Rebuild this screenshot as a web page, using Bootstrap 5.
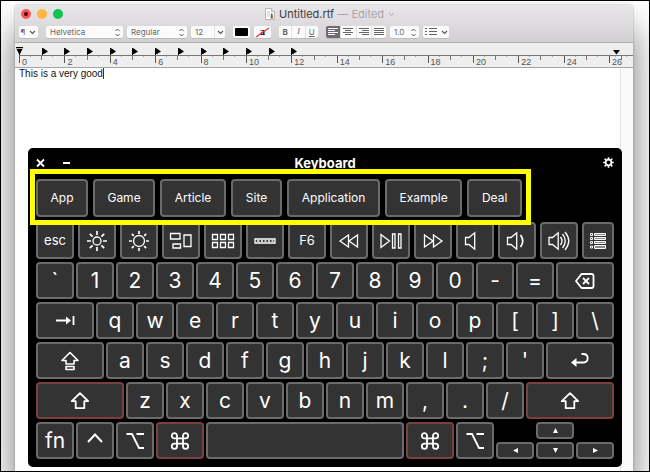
<!DOCTYPE html>
<html lang="en">
<head>
<meta charset="utf-8">
<meta name="viewport" content="width=device-width, initial-scale=1">
<title>Untitled.rtf</title>
<link rel="stylesheet" href="https://cdn.jsdelivr.net/npm/bootstrap@5.3.0/dist/css/bootstrap.min.css">
<style>
body { font-family: Inter, "Liberation Sans", sans-serif; border: 1px solid #000; background: #fff; overflow: hidden; }
.editor { margin: 4px 16px 0 14px; border-radius: 4px 4px 0 0; background: #fff; box-shadow: 0 0 2px rgba(0,0,0,.35), 0 24px 36px rgba(0,0,0,.55); }
.chrome { background: linear-gradient(#e9e6e9, #d2d0d2); border-bottom: 1px solid #b1afb1; border-radius: 4px 4px 0 0; padding: 0 4px; }
.titlebar { display: grid; grid-template-columns: 1fr auto 1fr; height: 18px; align-items: center; }
.lights { gap: 6px; padding-left: 2px; }
.light { width: 10px; height: 10px; border-radius: 50%; border: 0; padding: 0; display: grid; place-items: center; }
.light.red { background: #fc5753; } .light.amber { background: #fdb843; } .light.green { background: #0bc751; }
.light.red::after { content: ""; width: 4px; height: 4px; border-radius: 50%; background: #4d0000; }
.filename { font-size: 11px; line-height: 14px; color: #3c3a3c; padding-left: 12px; }
.state { color: #a9a6a9; }
.tools { padding: 3px 0 4px; height: 19px; }
.tools button, .tools select, .tools input, .tools .pill { height: 12px; border: 0; border-radius: 2px; background-color: #fbfbfb; color: #666; font-size: 8px; line-height: 12px; padding: 0; box-shadow: 0 1px 0 #bdbbbd; }
.tools button { display: flex; align-items: center; justify-content: center; }
.tools select { appearance: none; padding: 0 12px 0 4px; background-repeat: no-repeat; background-position: right 3px center; background-image: url("data:image/svg+xml,%3Csvg xmlns='http://www.w3.org/2000/svg' width='5' height='9' viewBox='0 0 5 9' fill='none' stroke='%23555'%3E%3Cpath d='M.5 3l2-2 2 2M.5 6l2 2 2-2'/%3E%3C/svg%3E"); }
.tools .segments { display: flex; box-shadow: 0 1px 0 #bdbbbd; border-radius: 2px; overflow: hidden; }
.tools .segments > * { flex: 1; border-radius: 0; box-shadow: none; border-left: 1px solid #e2e2e2; }
.tools .segments > :first-child { border-left: 0; }
.tools .segments > .chosen { background: #6d6b6d; color: #fff; }
.tools .segments > input { min-width: 0; flex-grow: 2; }
.w-para { width: 19px; } .w-face { width: 77px; } .w-style { width: 60px; } .w-size { width: 34px; } .w-ink { width: 17px; } .w-biu { width: 39px; } .w-align { width: 60px; } .w-space { width: 29px; } .w-list { width: 26px; }
.serif { font-family: "Liberation Serif", serif; }
.ruler { background: #eee; border-bottom: 1px solid #a5a5a5; padding-left: 4px; height: 25px; }
.unit { flex: 1 1 0; min-width: 0; display: flex; flex-direction: column; }
.unit.tail { flex: 0 0 24px; }
.stops { height: 13px; border-bottom: 1px solid #777; display: flex; align-items: flex-end; }
.stops > * { flex: 1; height: 7px; display: flex; }
.ticks { height: 11px; font: 9px/13px "Liberation Sans", sans-serif; color: #555; padding-left: 3px; background: linear-gradient(#555,#555) 0 0/1px 7px no-repeat, linear-gradient(#777,#777) 50% 0/1px 4px no-repeat, linear-gradient(#aaa,#aaa) 25% 0/1px 1px no-repeat, linear-gradient(#aaa,#aaa) 75% 0/1px 1px no-repeat; }
.paper { background: linear-gradient(90deg, #fff calc(100% - 13px), #e6e6e6 calc(100% - 13px), #e6e6e6 calc(100% - 12px), #fafafa calc(100% - 12px)); }
.prose { height: 80px; padding-left: 4px; }
.prose input { font: 10px/12px "Liberation Sans", sans-serif; color: #111; border: 0; padding: 0; width: 84px; height: 12px; background: none; }
.caret { width: 1px; height: 11px; background: #333; }
.keyboard { background: #000; border-radius: 5px; margin: 0 11px 0 13px; padding: 0 8px 8px; color: #fff; }
.kb-head { display: grid; grid-template-columns: 1fr auto 1fr; height: 31px; align-items: center; padding-bottom: 2px; }
.kb-head h1 { font-size: 13px; line-height: 16px; font-weight: 700; margin: 0; }
.kb-head button { background: none; border: 0; padding: 0; color: #fff; display: flex; }
.guesses { display: flex; gap: 5px; position: relative; width: 84.1%; margin-bottom: 5px; }
.guesses::after { content: ""; position: absolute; inset: -10px -9px -8px -6px; border: 5px solid #ff0; pointer-events: none; z-index: 2; }
.keyrow { display: flex; gap: 2px; margin-bottom: 3px; }
.keyrow:last-child { margin-bottom: 0; }
.keyrow.fkeys { gap: 4px; }
.key { --w: 38; flex: var(--w) var(--w) calc(var(--w) * 1px); min-width: 0; height: 37px; padding: 0; border: 2px solid #6b6b6b; border-radius: 4px; background: #333; color: #fff; font-size: 21px; line-height: 1; display: flex; align-items: center; justify-content: center; }
.guesses .key { height: 38px; font-size: 12px; }
.fkeys .key { font-size: 13px; }
.k32 { --w: 32; } .k48 { --w: 48; } .k51 { --w: 51; } .k52 { --w: 52; } .k55 { --w: 55; } .k58 { --w: 58; } .k62 { --w: 62; } .k66 { --w: 66; } .k68 { --w: 68; } .k77 { --w: 77; } .k88 { --w: 88; } .k93 { --w: 93; } .k198 { --w: 198; }
.key.held { border-color: #7c4040; }
.arrows { flex: 118 118 118px; display: grid; grid-template-columns: repeat(3, 1fr); gap: 3px 2px; }
.arrows .key { height: 17px; }
.arrows .up { grid-column: 2; } .arrows .west { grid-column: 1; }
.ico { width: 24px; height: 24px; flex: none; fill: none; stroke: currentColor; stroke-width: 1.3; }
.bold-ico { stroke-width: 1.8; }
.tiny { width: 7px; height: 7px; fill: currentColor; }
</style>
<script src="https://cdn.jsdelivr.net/npm/bootstrap@5.3.0/dist/js/bootstrap.bundle.min.js"></script>
</head>
<body class="min-vh-100 d-flex flex-column">
<svg class="d-none" aria-hidden="true">
  <symbol id="stop" viewBox="0 0 6 7"><path d="M0 0h1l5 3.500-4 2.500H1v1H0z" fill="#000"/></symbol>
  <symbol id="down" viewBox="0 0 7 5"><path d="M1 1l2.500 2.500L6 1" fill="none" stroke="#555" stroke-width="1.100"/></symbol>
  <symbol id="shift" viewBox="0 0 24 24"><path d="M12 4.200L20.200 12.200H16.300V19.200H7.700V12.200H3.800z" stroke-linejoin="round"/></symbol>
  <symbol id="option" viewBox="0 0 24 24"><path d="M3.500 5H9l7 14h5M13.500 5H21"/></symbol>
  <symbol id="command" viewBox="0 0 24 24"><path d="M9 9V6.800A2.600 2.600 0 1 0 6.400 9.400H17.600A2.600 2.600 0 1 0 15 6.800V17.200A2.600 2.600 0 1 0 17.600 14.600H6.400A2.600 2.600 0 1 0 9 17.200z"/></symbol>
</svg>
<main class="editor flex-fill d-flex flex-column">
  <header class="chrome">
    <div class="titlebar">
      <div class="d-flex lights">
        <button class="light red" aria-label="Close"></button>
        <button class="light amber" aria-label="Minimize"></button>
        <button class="light green" aria-label="Zoom"></button>
      </div>
      <div class="filename d-flex align-items-center gap-1">
        <svg width="10" height="12" viewBox="0 0 10 12"><path d="M.5.5h6l3 3v8h-9z" fill="#fff" stroke="#b5b5b5"/><path d="M6.500.5v3h3" fill="#e5e5e5" stroke="#b5b5b5"/><path d="M2 4h3M2 6h3M2 8h3" stroke="#ccc"/><path d="M6 5.500h1.500l.5 5H5.500z" fill="#8b5a32"/></svg>
        <span>Untitled.rtf <span class="state">— Edited</span></span>
        <svg width="7" height="5"><path d="M1 1l2.500 2.500L6 1" fill="none" stroke="#a9a6a9"/></svg>
      </div>
    </div>
    <div class="tools d-flex">
      <button class="w-para me-2" aria-label="Paragraph styles">¶<svg class="ms-1" width="7" height="5"><use href="#down"/></svg></button>
      <select class="w-face me-1" aria-label="Font"><option>Helvetica</option></select>
      <select class="w-style me-1" aria-label="Typeface"><option>Regular</option></select>
      <div class="segments w-size me-2">
        <input class="ps-1" aria-label="Size" value="12">
        <button aria-label="Sizes"><svg width="7" height="5"><use href="#down"/></svg></button>
      </div>
      <button class="w-ink me-1" aria-label="Text colour"><svg width="13" height="8"><rect width="13" height="8" rx="1" fill="#000"/></svg></button>
      <button class="w-ink me-2" aria-label="Highlight colour"><svg width="15" height="11" viewBox="0 0 15 11"><text x="5" y="8" font-family="Liberation Serif, serif" font-weight="700" font-size="10" fill="#000">a</text><path d="M1 10L14 1" stroke="#e5304a" stroke-width="1.300"/></svg></button>
      <div class="segments w-biu me-2">
        <button class="fw-bold">B</button><button class="serif"><i>I</i></button><button><u>U</u></button>
      </div>
      <div class="segments w-align me-1">
        <button class="chosen" aria-label="Align left"><svg width="10" height="8" stroke="currentColor"><path d="M0 .5h10M0 2.500h7M0 4.500h10M0 6.500h7"/></svg></button>
        <button aria-label="Centre"><svg width="10" height="8" stroke="currentColor"><path d="M0 .5h10M2 2.500h6M0 4.500h10M2 6.500h6"/></svg></button>
        <button aria-label="Align right"><svg width="10" height="8" stroke="currentColor"><path d="M0 .5h10M3 2.500h7M0 4.500h10M3 6.500h7"/></svg></button>
        <button aria-label="Justify"><svg width="10" height="8" stroke="currentColor"><path d="M0 .5h10M0 2.500h10M0 4.500h10M0 6.500h10"/></svg></button>
      </div>
      <select class="w-space me-1" aria-label="Line spacing"><option>1.0</option></select>
      <button class="w-list" aria-label="Lists"><svg width="12" height="8" stroke="currentColor"><path d="M0 .5h2M4 .5h8M0 3.500h2M4 3.500h8M0 6.500h2M4 6.500h8"/></svg><svg class="ms-1" width="7" height="5"><use href="#down"/></svg></button>
    </div>
  </header>
  <div class="ruler d-flex">
    <div class="unit"><div class="stops"><span><svg width="7" height="7" style="margin-left:-3px;overflow:visible"><path d="M0 -1h7v1.200H0zM.5 1h6L4 6v1H3V6z"/></svg></span><span><svg width="6" height="7"><use href="#stop"/></svg></span></div><div class="ticks">0</div></div>
    <div class="unit"><div class="stops"><span><svg width="6" height="7"><use href="#stop"/></svg></span><span><svg width="6" height="7"><use href="#stop"/></svg></span></div><div class="ticks">2</div></div>
    <div class="unit"><div class="stops"><span><svg width="6" height="7"><use href="#stop"/></svg></span><span><svg width="6" height="7"><use href="#stop"/></svg></span></div><div class="ticks">4</div></div>
    <div class="unit"><div class="stops"><span><svg width="6" height="7"><use href="#stop"/></svg></span><span><svg width="6" height="7"><use href="#stop"/></svg></span></div><div class="ticks">6</div></div>
    <div class="unit"><div class="stops"><span><svg width="6" height="7"><use href="#stop"/></svg></span><span><svg width="6" height="7"><use href="#stop"/></svg></span></div><div class="ticks">8</div></div>
    <div class="unit"><div class="stops"><span><svg width="6" height="7"><use href="#stop"/></svg></span><span><svg width="6" height="7"><use href="#stop"/></svg></span></div><div class="ticks">10</div></div>
    <div class="unit"><div class="stops"><span><svg width="6" height="7"><use href="#stop"/></svg></span></div><div class="ticks">12</div></div>
    <div class="unit"><div class="stops"></div><div class="ticks">14</div></div>
    <div class="unit"><div class="stops"></div><div class="ticks">16</div></div>
    <div class="unit"><div class="stops"></div><div class="ticks">18</div></div>
    <div class="unit"><div class="stops"></div><div class="ticks">20</div></div>
    <div class="unit"><div class="stops"></div><div class="ticks">22</div></div>
    <div class="unit"><div class="stops"></div><div class="ticks">24</div></div>
    <div class="unit tail"><div class="stops"><span class="ps-1"><svg width="7" height="7"><path d="M0 2h7L3.500 6.500z"/></svg></span></div><div class="ticks">26</div></div>
  </div>
  <section class="paper flex-fill">
    <div class="prose d-flex"><input aria-label="Document text" value="This is a very good"><span class="caret"></span></div>
    <div class="keyboard">
      <div class="kb-head">
        <div class="d-flex align-items-center">
          <button class="me-3" aria-label="Close keyboard"><svg width="10" height="10" stroke="#fff" stroke-width="1.800"><path d="M1 1.500l7 7M8 1.500l-7 7"/></svg></button>
          <button aria-label="Minimize keyboard"><svg width="9" height="10"><rect x="1" y="4" width="7" height="2" fill="#fff"/></svg></button>
        </div>
        <h1>Keyboard</h1>
        <button class="ms-auto" aria-label="Settings"><svg width="11" height="11" viewBox="-5.500 -5.500 11 11" fill="none" stroke="#fff"><circle r="2.900" stroke-width="1.800"/><path stroke-width="1.700" d="M0-5.300v2M0 5.300v-2M-5.300 0h2M5.300 0h-2M-3.800-3.800l1.400 1.400M3.800 3.800l-1.400-1.400M-3.800 3.800l1.400-1.400M3.800-3.800l-1.400 1.400"/></svg></button>
      </div>
      <div class="guesses">
        <button class="key k52">App</button><button class="key k62">Game</button><button class="key k66">Article</button><button class="key k51">Site</button><button class="key k93">Application</button><button class="key k77">Example</button><button class="key k55">Deal</button>
      </div>
      <div class="keyrow fkeys">
        <button class="key">esc</button>
        <button class="key" aria-label="Brightness down"><svg class="ico" viewBox="-12 -12 24 24"><circle r="4"/><path stroke-width="1.700" d="M0-10v4M0 10v-4M-10 0h4M10 0h-4M-7.200-7.200l2.800 2.800M7.200 7.200l-2.800-2.800M-7.200 7.200l2.800-2.800M7.200-7.200l-2.800 2.800"/></svg></button>
        <button class="key" aria-label="Brightness up"><svg class="ico" viewBox="-12 -12 24 24"><circle r="5.500"/><path stroke-width="1.700" d="M0-10v3M0 10v-3M-10 0h3M10 0h-3M-7.200-7.200l2 2M7.200 7.200l-2-2M-7.200 7.200l2-2M7.200-7.200l-2 2"/></svg></button>
        <button class="key" aria-label="Mission Control"><svg class="ico" viewBox="0 0 24 24"><path d="M1.500 4.500h9.500v5.500H1.500zM4 15h7.500v4H4zM15 6h7v11.500h-7z"/></svg></button>
        <button class="key" aria-label="Launchpad"><svg class="ico" viewBox="0 0 24 24"><path d="M1.500 5.500h5v5h-5zM9.500 5.500h5v5h-5zM17.500 5.500h5v5h-5zM1.500 13.500h5v5h-5zM9.500 13.500h5v5h-5zM17.500 13.500h5v5h-5z"/></svg></button>
        <button class="key" aria-label="Touch Bar"><svg class="ico" viewBox="0 0 24 24"><path d="M2 10h20v4H2z"/><path d="M4 12h2.500M8 12h2M11.500 12h2M15 12h2M18.500 12h2" stroke-width="1.500"/></svg></button>
        <button class="key">F6</button>
        <button class="key" aria-label="Rewind"><svg class="ico" viewBox="0 0 24 24"><path d="M11.500 6v12L3 12zM20.500 6v12L12 12z"/></svg></button>
        <button class="key" aria-label="Play or pause"><svg class="ico" viewBox="0 0 24 24"><path d="M2 5.500v13l8.500-6.500zM13.500 5h2.500v14h-2.500zM19.500 5h2.500v14h-2.500z"/></svg></button>
        <button class="key" aria-label="Fast forward"><svg class="ico" viewBox="0 0 24 24"><path d="M3.500 6v12L12 12zM12.500 6v12L21 12z"/></svg></button>
        <button class="key" aria-label="Mute"><svg class="ico" viewBox="0 0 24 24"><path d="M2.500 8.500H6L11.700 3.800v16.400L6 15.500H2.500z"/></svg></button>
        <button class="key" aria-label="Volume down"><svg class="ico" viewBox="0 0 24 24"><path d="M2.500 8.500H6L11.700 3.800v16.400L6 15.500H2.500z"/><path stroke-width="1.700" d="M15.500 6q4.500 6 0 12"/></svg></button>
        <button class="key" aria-label="Volume up"><svg class="ico" viewBox="0 0 24 24"><path d="M2 8.500H5.500L11.200 3.800v16.400L5.500 15.500H2z"/><path d="M13.500 8q3 4 0 8M15.500 5q5.500 7 0 14M18 3q7.500 9 0 18"/></svg></button>
        <button class="key k32" aria-label="Touch list"><svg class="ico" viewBox="0 0 24 24" style="stroke-width:1"><path fill="#888" d="M8.500 4.500h11v2h-11zM8.500 8.500h11v2h-11zM8.500 12.500h11v2h-11zM8.500 16.500h11v3h-11z"/><path d="M4.500 4.500h2v2h-2zM4.500 8.500h2v2h-2zM4.500 12.500h2v2h-2zM4.500 17h2v2h-2z"/></svg></button>
      </div>
      <div class="keyrow">
        <button class="key">`</button><button class="key">1</button><button class="key">2</button><button class="key">3</button><button class="key">4</button><button class="key">5</button><button class="key">6</button><button class="key">7</button><button class="key">8</button><button class="key">9</button><button class="key">0</button><button class="key">-</button><button class="key">=</button>
        <button class="key k58" aria-label="Delete"><svg class="ico bold-ico" viewBox="0 0 24 24"><path stroke-linejoin="round" d="M8.500 5H18.500Q20.500 5 20.500 7V17Q20.500 19 18.500 19H8.500L3 12z"/><path d="M10 9l6 6M16 9l-6 6"/></svg></button>
      </div>
      <div class="keyrow">
        <button class="key k58" aria-label="Tab"><svg class="ico bold-ico" viewBox="0 0 24 24"><path d="M3 11.500h11M20.500 7v9"/><path d="M13 7.500l5 4-5 4z" fill="#fff" stroke="none"/></svg></button>
        <button class="key">q</button><button class="key">w</button><button class="key">e</button><button class="key">r</button><button class="key">t</button><button class="key">y</button><button class="key">u</button><button class="key">i</button><button class="key">o</button><button class="key">p</button><button class="key">[</button><button class="key">]</button><button class="key">\</button>
      </div>
      <div class="keyrow">
        <button class="key k68" aria-label="Caps Lock"><svg class="ico" viewBox="0 0 24 24" style="stroke-width:1.600"><path stroke-linejoin="round" d="M12 3.500L20 11.500H16V15H8V11.500H4zM8 17.500h8v3H8z"/></svg></button>
        <button class="key">a</button><button class="key">s</button><button class="key">d</button><button class="key">f</button><button class="key">g</button><button class="key">h</button><button class="key">j</button><button class="key">k</button><button class="key">l</button><button class="key">;</button><button class="key">'</button>
        <button class="key k68" aria-label="Return"><svg class="ico bold-ico" viewBox="0 0 24 24"><path d="M7 13.500H16A4.300 4.300 0 0 0 16 5H13.500"/><path d="M8.500 9v9L3 13.500z" fill="#fff" stroke="none"/></svg></button>
      </div>
      <div class="keyrow">
        <button class="key k88 held" aria-label="Left Shift"><svg class="ico bold-ico"><use href="#shift"/></svg></button>
        <button class="key">z</button><button class="key">x</button><button class="key">c</button><button class="key">v</button><button class="key">b</button><button class="key">n</button><button class="key">m</button><button class="key">,</button><button class="key">.</button><button class="key">/</button>
        <button class="key k88 held" aria-label="Right Shift"><svg class="ico bold-ico"><use href="#shift"/></svg></button>
      </div>
      <div class="keyrow">
        <button class="key">fn</button>
        <button class="key" aria-label="Control"><svg class="ico bold-ico" viewBox="0 0 24 24" style="stroke-width:2"><path d="M5 13l7-7.500 7 7.500"/></svg></button>
        <button class="key" aria-label="Left Option"><svg class="ico bold-ico"><use href="#option"/></svg></button>
        <button class="key k48 held" aria-label="Left Command"><svg class="ico bold-ico"><use href="#command"/></svg></button>
        <button class="key k198" aria-label="Space"></button>
        <button class="key k48 held" aria-label="Right Command"><svg class="ico bold-ico"><use href="#command"/></svg></button>
        <button class="key" aria-label="Right Option"><svg class="ico bold-ico"><use href="#option"/></svg></button>
        <div class="arrows">
          <button class="key up" aria-label="Up"><svg class="tiny" viewBox="0 0 7 7"><path d="M3.500 1L6 6H1z"/></svg></button>
          <button class="key west" aria-label="Left"><svg class="tiny" viewBox="0 0 7 7"><path d="M1 3.500L6 1v5z"/></svg></button>
          <button class="key" aria-label="Down"><svg class="tiny" viewBox="0 0 7 7"><path d="M3.500 6L6 1H1z"/></svg></button>
          <button class="key" aria-label="Right"><svg class="tiny" viewBox="0 0 7 7"><path d="M6 3.500L1 1v5z"/></svg></button>
        </div>
      </div>
    </div>
  </section>
</main>
</body>
</html>
